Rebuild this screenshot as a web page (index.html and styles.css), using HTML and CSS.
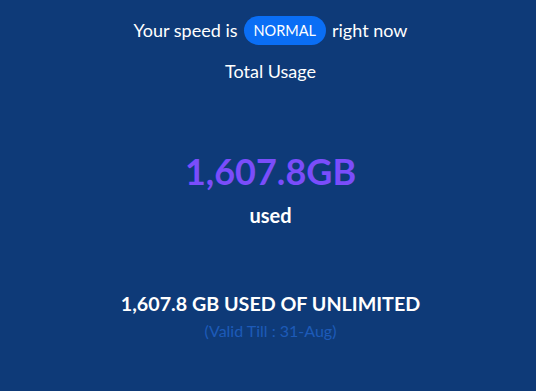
FILE: index.html
```html
<!DOCTYPE html>
<html>
<head>
<meta charset="utf-8">
<link rel="stylesheet" href="styles.css">
</head>
<body>
<div class="page">
  <div class="speed">Your speed is <span class="badge">NORMAL</span> right now</div>
  <div class="title">Total Usage</div>
  <div class="big">1,607.8GB</div>
  <div class="used">used</div>
  <div class="summary">1,607.8 GB USED OF UNLIMITED</div>
  <div class="valid">(Valid Till : 31-Aug)</div>
</div>
</body>
</html>
```
FILE: styles.css
```css
html, body {
  margin: 0;
  padding: 0;
  background: #0e3a78;
}
body {
  font-family: Lato, "Open Sans", sans-serif;
  color: #ffffff;
  width: 536px;
  height: 391px;
  overflow: hidden;
}
.page {
  display: flex;
  flex-direction: column;
  align-items: center;
  padding-top: 16px;
  padding-left: 5px;
}
.speed {
  font-size: 18px;
  line-height: 29px;
  display: flex;
  align-items: center;
  gap: 6px;
}
.badge {
  background: #0a6ef5;
  color: #fff;
  font-size: 14.5px;
  border-radius: 15px;
  padding: 0 10px;
  line-height: 29px;
  height: 29px;
}
.title {
  font-size: 18px;
  margin-top: 14px;
  line-height: 24px;
}
.big {
  font-size: 36px;
  font-weight: 700;
  color: #7a4dfb;
  margin-top: 66px;
  line-height: 44px;
}
.used {
  font-size: 20px;
  font-weight: 700;
  line-height: 26px;
  margin-top: 9px;
}
.summary {
  font-size: 19.7px;
  font-weight: 700;
  margin-top: 63px;
  line-height: 26px;
}
.valid {
  font-size: 16px;
  color: #1d5ab8;
  margin-top: 3px;
  line-height: 22px;
}
```
